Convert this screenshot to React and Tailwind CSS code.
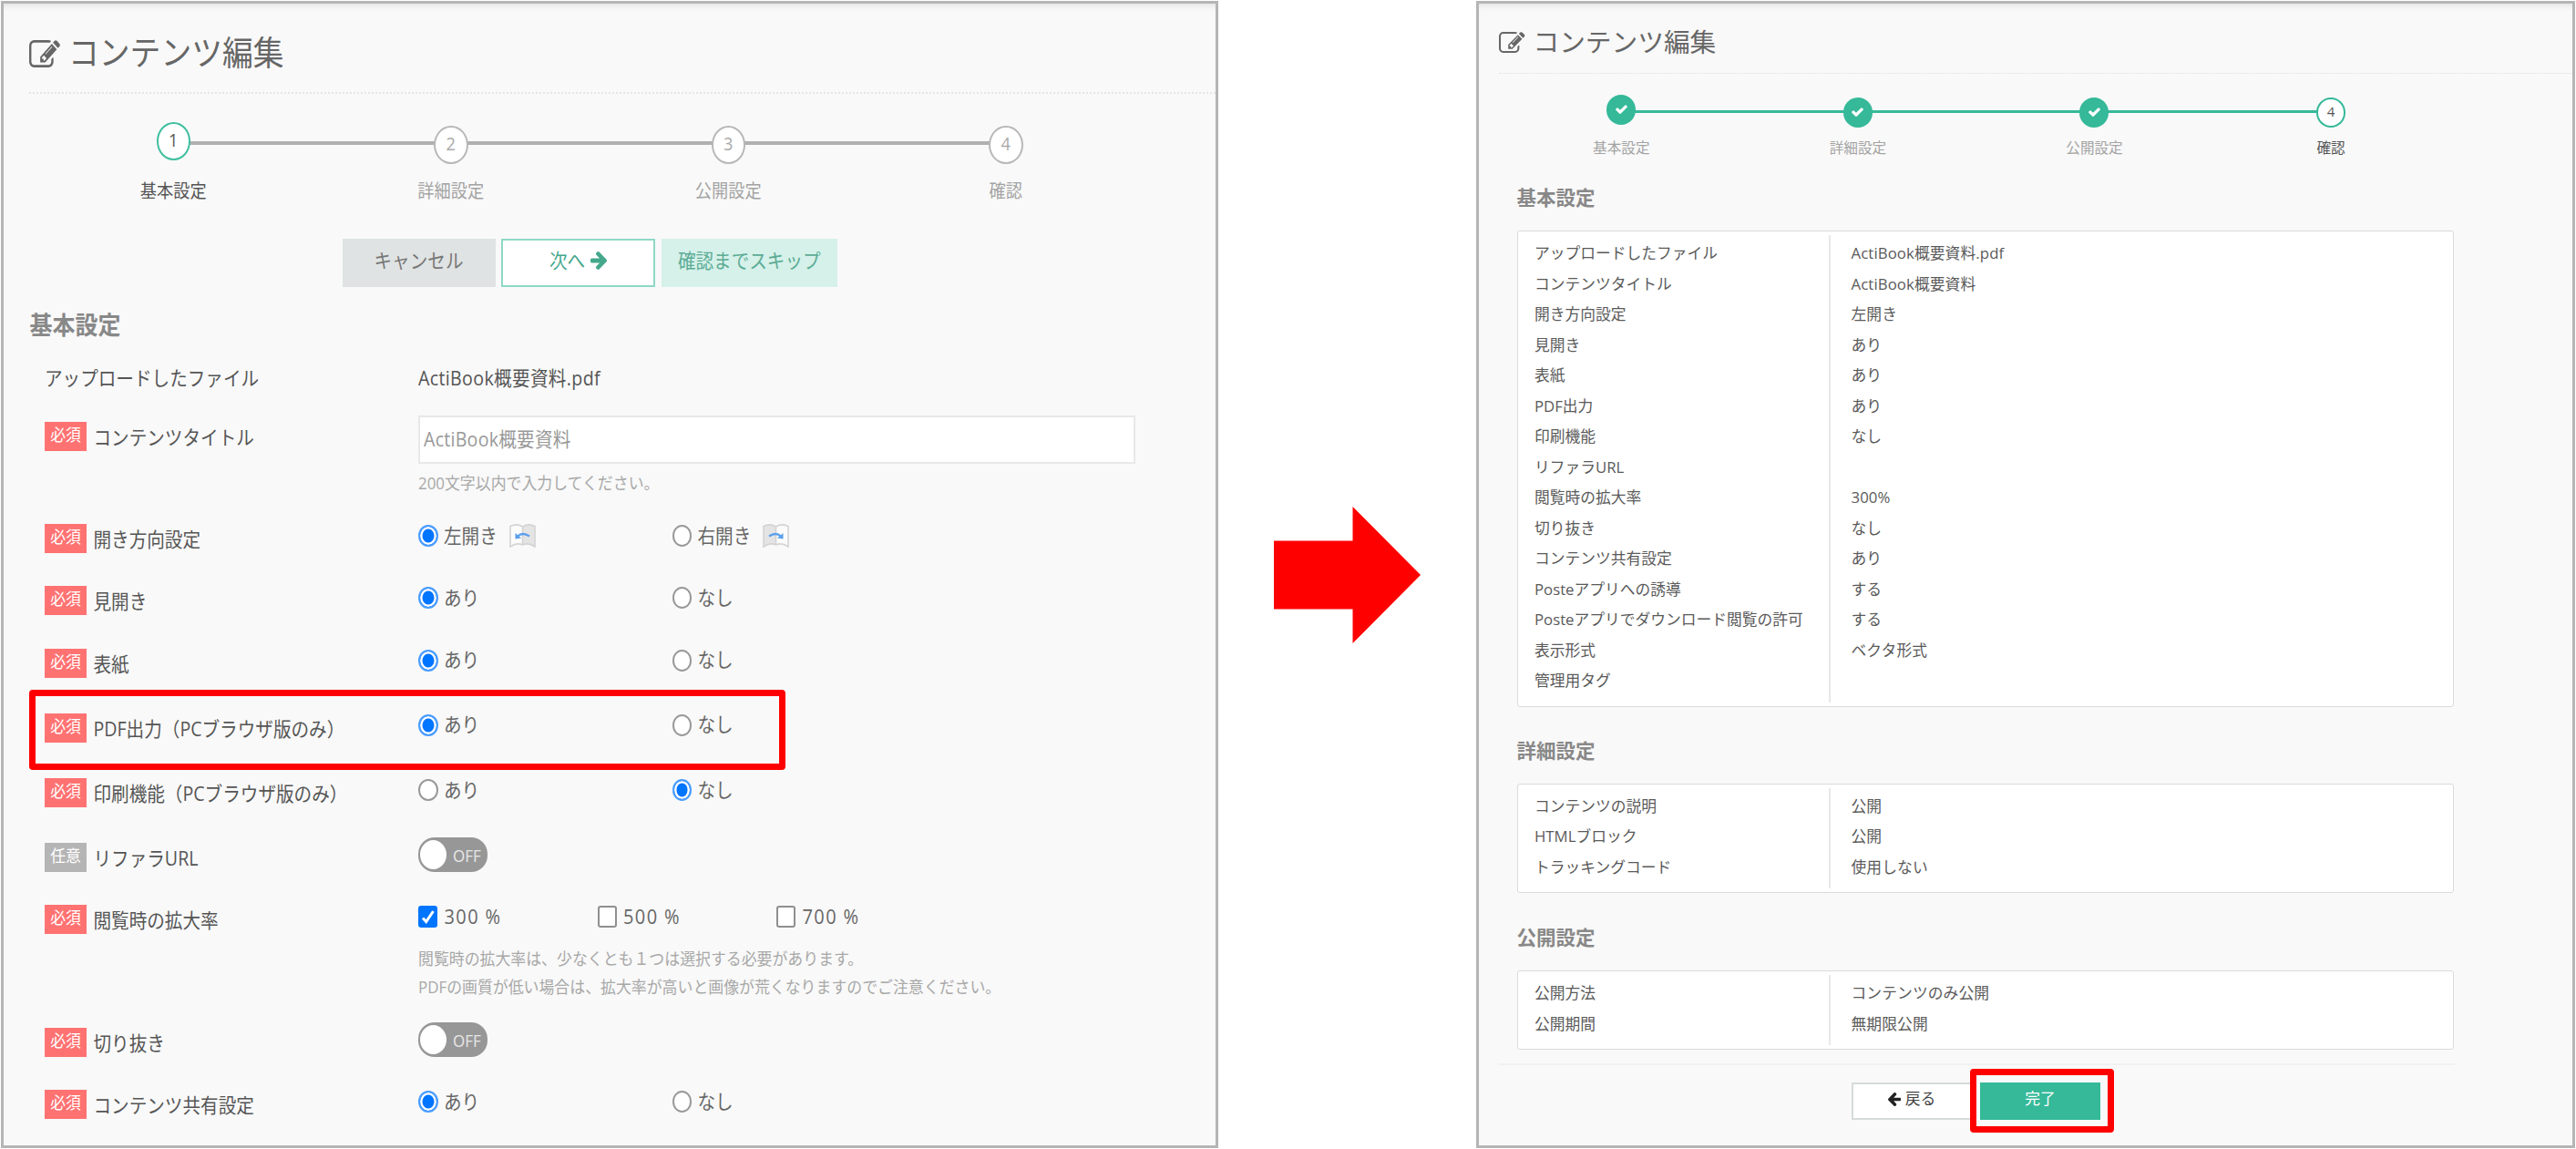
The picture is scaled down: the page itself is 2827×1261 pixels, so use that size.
import clsx from "clsx";

const formRows = [
  { label: "見開き", height: "h-[68.7px]", value: "あり" },
  { label: "表紙", height: "h-[71px]", value: "あり" },
  { label: "PDF出力（PCブラウザ版のみ）", height: "h-[71.3px]", value: "あり" },
  { label: "印刷機能（PCブラウザ版のみ）", height: "h-[71.2px]", value: "なし" },
];

const basicSummary = [
  ["アップロードしたファイル", "ActiBook概要資料.pdf"],
  ["コンテンツタイトル", "ActiBook概要資料"],
  ["開き方向設定", "左開き"],
  ["見開き", "あり"],
  ["表紙", "あり"],
  ["PDF出力", "あり"],
  ["印刷機能", "なし"],
  ["リファラURL", ""],
  ["閲覧時の拡大率", "300%"],
  ["切り抜き", "なし"],
  ["コンテンツ共有設定", "あり"],
  ["Posteアプリへの誘導", "する"],
  ["Posteアプリでダウンロード閲覧の許可", "する"],
  ["表示形式", "ベクタ形式"],
  ["管理用タグ", ""],
];

const detailSummary = [
  ["コンテンツの説明", "公開"],
  ["HTMLブロック", "公開"],
  ["トラッキングコード", "使用しない"],
];

const publishSummary = [
  ["公開方法", "コンテンツのみ公開"],
  ["公開期間", "無期限公開"],
];

const stepNames = ["基本設定", "詳細設定", "公開設定", "確認"];

function EditIcon({ className }) {
  return (
    <svg
      viewBox="0 128 1792 1408"
      preserveAspectRatio="none"
      fill="currentColor"
      className={className}
    >
      <path d="M888 1184l116-116-152-152-116 116v56h96v96h56zm440-720q-16-16-33 1l-350 350q-17 17-1 33t33-1l350-350q17-17 1-33zm80 594v190q0 119-84.5 203.5t-203.5 84.5h-832q-119 0-203.5-84.5t-84.5-203.5v-832q0-119 84.5-203.5t203.5-84.5h832q63 0 117 25 15 7 18 23 3 17-9 29l-49 49q-14 14-32 8-23-6-45-6h-832q-66 0-113 47t-47 113v832q0 66 47 113t113 47h832q66 0 113-47t47-113v-126q0-13 9-22l64-64q15-15 35-7t20 29zm-96-738l288 288-672 672h-288v-288zm444 132l-92 92-288-288 92-92q28-28 68-28t68 28l152 152q28 28 28 68t-28 68z" />
    </svg>
  );
}

function ArrowIcon({ className }) {
  return (
    <svg
      viewBox="128 183 1472 1556"
      preserveAspectRatio="none"
      fill="currentColor"
      className={className}
    >
      <path d="M1600 960q0 54-37 91l-651 651q-39 37-91 37-51 0-90-37l-75-75q-38-38-38-91t38-91l293-293h-704q-52 0-84.5-37.5t-32.5-90.5v-128q0-53 32.5-90.5t84.5-37.5h704l-293-294q-38-36-38-90t38-90l75-75q38-38 90-38 53 0 91 38l651 651q37 35 37 90z" />
    </svg>
  );
}

function CheckIcon({ className }) {
  return (
    <svg viewBox="121 314 1550 1208" fill="currentColor" className={className}>
      <path d="M1671 566q0 40-28 68l-724 724-136 136q-28 28-68 28t-68-28l-136-136-362-362q-28-28-28-68t28-68l136-136q28-28 68-28t68 28l294 295 656-657q28-28 68-28t68 28l136 136q28 28 28 68z" />
    </svg>
  );
}

function BookIcon({ flipped }) {
  return (
    <svg viewBox="0 0 29 26" className="ml-[13px] h-[26px] w-[29px] shrink-0">
      <g transform={flipped ? "matrix(-1 0 0 1 29 0)" : undefined}>
        <path d="M1 2.5Q8-1 14.5 3V23Q8 20 1 25Z" fill="#fbfbfb" />
        <path d="M28 2.5Q21-1 14.5 3V23Q21 20 28 25Z" fill="#e4e4e4" />
        <path
          d="M14.5 3Q8-1 1 2.5V25Q8 20 14.5 23Q21 20 28 25V2.5Q21-1 14.5 3V23"
          fill="none"
          stroke="#d4d4d4"
          strokeWidth="1.6"
        />
        <path d="M9 13.5Q14.5 8.5 22 13.5" fill="none" stroke="#5a9fec" strokeWidth="2.2" />
        <path d="M6.5 10V16.5L13 15.5Z" fill="#5a9fec" />
      </g>
    </svg>
  );
}

// Form labels are set slightly taller than their natural proportions
function Tall({ className, children }) {
  return (
    <span className={clsx("inline-block scale-y-110 whitespace-nowrap", className)}>
      {children}
    </span>
  );
}

function Badge({ optional }) {
  return (
    <span
      className={clsx(
        "mr-[7.5px] flex h-8 w-[46px] shrink-0 items-center justify-center pb-[3px] text-[16.8px] leading-none text-white",
        optional ? "bg-[#b5b5b5]" : "bg-[#ff7272]"
      )}
    >
      <Tall>{optional ? "任意" : "必須"}</Tall>
    </span>
  );
}

function FormRow({ label, height, optional, labelPad = "pt-[3px]", children }) {
  return (
    <div className={clsx("flex items-start", height)}>
      <div className={clsx("flex w-[410px] shrink-0", labelPad)}>
        <Badge optional={optional} />
        <Tall className="pt-px leading-8 text-[#555]">{label}</Tall>
      </div>
      <div>{children}</div>
    </div>
  );
}

function Radio({ label, checked, children }) {
  return (
    <label className="flex h-8 w-[278.5px] items-center">
      <input
        type="radio"
        checked={checked}
        readOnly
        className="mr-[6.5px] h-6 w-[21.5px] shrink-0 appearance-none rounded-[50%] border-2 border-[#999] bg-white checked:border-[#4a9dff] checked:bg-[#0075ff] checked:shadow-[inset_0_0_0_2.5px_#fff]"
      />
      <Tall className="-mt-px text-[#666]">{label}</Tall>
      {children}
    </label>
  );
}

function YesNo({ value }) {
  return (
    <div className="flex">
      <Radio label="あり" checked={value === "あり"} />
      <Radio label="なし" checked={value === "なし"} />
    </div>
  );
}

function Toggle() {
  return (
    <div className="-mt-[3px] flex h-[38px] w-[75.5px] items-center rounded-[18px] bg-[#979797] pl-[2px]">
      <span className="h-8 w-[29px] rounded-[50%] bg-white" />
      <Tall className="ml-[7px] text-[17px] leading-none text-[#e8e8e8]">OFF</Tall>
    </div>
  );
}

function Checkbox({ label, checked }) {
  return (
    <label className="flex h-8 w-[196.5px] items-center">
      <span
        className={clsx(
          "mr-[7.5px] flex h-6 w-[21px] items-center justify-center rounded-[3px]",
          checked ? "bg-[#0075ff] text-white" : "border-2 border-[#8f8f8f] bg-white"
        )}
      >
        {checked && (
          <svg viewBox="0 0 16 18" className="h-[18px] w-4">
            <path
              d="M2 10.5L5.7 14.5L13.5 3"
              fill="none"
              stroke="currentColor"
              strokeWidth="3"
            />
          </svg>
        )}
      </span>
      <Tall className="text-[20px] tracking-[1.4px] text-[#666]">{label}</Tall>
    </label>
  );
}

function EditSteps() {
  return (
    <div className="relative ml-[34px] mt-[31px] flex">
      <div className="absolute left-[152px] top-[21px] h-[3.5px] w-[913px] bg-[#b0b0b0]" />
      {stepNames.map((name, i) => (
        <div key={name} className="relative flex w-[304.5px] flex-col items-center">
          <div className="flex h-[61px] items-start">
            <span
              className={clsx(
                "flex h-[42px] w-[37.5px] items-center justify-center rounded-[50%] border-2 bg-white pb-0.5 text-[18.2px]",
                i === 0 ? "border-[#3fbf9f] text-[#555]" : "mt-[3.5px] border-[#b8b8b8] text-[#aaa]"
              )}
            >
              <Tall>{i + 1}</Tall>
            </span>
          </div>
          <Tall
            className={clsx("text-[18.2px] leading-7", i === 0 ? "text-[#555]" : "text-[#a3a3a3]")}
          >
            {name}
          </Tall>
        </div>
      ))}
    </div>
  );
}

function ConfirmSteps() {
  return (
    <div className="relative ml-[26.5px] mt-[23px] flex">
      <div className="absolute left-[130px] top-[17px] h-[3px] w-[779px] bg-[#35b999]" />
      {stepNames.map((name, i) => (
        <div key={name} className="relative flex w-[259.6px] flex-col items-center">
          <div className="flex h-[46px] items-start">
            <span
              className={clsx(
                "flex h-[32.5px] w-8 items-center justify-center rounded-[50%] border-2 border-[#35b999] text-[15px]",
                i > 0 && "mt-[3px]",
                i < 3 ? "bg-[#35b999] text-white" : "bg-white pb-0.5 text-[#555]"
              )}
            >
              {i < 3 ? <CheckIcon className="h-[10px] w-[13px]" /> : i + 1}
            </span>
          </div>
          <span
            className={clsx("text-[15.6px] leading-6", i === 3 ? "text-[#555]" : "text-[#a3a3a3]")}
          >
            {name}
          </span>
        </div>
      ))}
    </div>
  );
}

function Summary({ title, rows, className }) {
  return (
    <section className={clsx("ml-[41.5px] w-[1028.5px]", className)}>
      <h2 className="text-[21.5px] font-bold leading-8 text-[#888]">{title}</h2>
      <div className="mt-[20px] rounded-[3px] border-[1.5px] border-[#dadada] bg-white py-1">
        <dl className="grid grid-cols-[343px_1fr] text-[16.75px] leading-[33.5px] text-[#5a5a5a]">
          <div className="border-r-2 border-[#e8e8e8] pb-[7px] pl-[18.5px] pt-[3px]">
            {rows.map(([name]) => (
              <dt key={name} className="h-[33.5px] whitespace-nowrap">
                {name}
              </dt>
            ))}
          </div>
          <div className="pl-[23px] pt-[3px] tracking-[0.1px]">
            {rows.map(([name, value]) => (
              <dd key={name} className="h-[33.5px]">
                {value}
              </dd>
            ))}
          </div>
        </dl>
      </div>
    </section>
  );
}

function EditPanel() {
  return (
    <div className="relative h-[1259px] w-[1336px] shrink-0 overflow-hidden border-[3px] border-[#b5b5b5] bg-[#f9f9f9] text-[19.6px] shadow-[inset_0_7px_6px_-4px_#e4e4e4]">
      <header className="ml-[28px] flex h-[99px] items-center border-b-2 border-dotted border-[#e6e6e6] pt-[12px]">
        <EditIcon className="h-[30px] w-[34px] text-[#666]" />
        <Tall className="ml-[9px] text-[33.8px] leading-none text-[#666]">コンテンツ編集</Tall>
      </header>

      <EditSteps />

      <div className="ml-[371.5px] mt-[39px] flex gap-[6.5px]">
        <button className="flex h-[53px] w-[168px] items-center justify-center bg-[#dfe3e3] pb-[5px] text-[#777]">
          <Tall>キャンセル</Tall>
        </button>
        <button className="flex h-[53px] w-[169px] items-center justify-center gap-[6px] border-2 border-[#8fd8c6] bg-white pb-[5px] text-[#45a88c]">
          <Tall>次へ</Tall>
          <ArrowIcon className="h-5 w-[18px]" />
        </button>
        <button className="flex h-[53px] w-[193.5px] items-center justify-center bg-[#d5f1e9] pb-[5px] text-[#5cab95]">
          <Tall>確認までスキップ</Tall>
        </button>
      </div>

      <h2 className="ml-[28.5px] mt-[23px] text-[25px] font-bold leading-9 text-[#888]">
        <Tall>基本設定</Tall>
      </h2>

      <div className="ml-[45px] mt-[26px]">
        <div className="flex h-[56px] leading-8 text-[#555]">
          <Tall className="w-[410px]">アップロードしたファイル</Tall>
          <Tall className="tracking-[0.35px]">ActiBook概要資料.pdf</Tall>
        </div>

        <FormRow label="コンテンツタイトル" height="h-[116px]" labelPad="pt-[6.5px]">
          <div className="flex h-[53px] w-[786.5px] items-center border-2 border-[#e8e8e8] bg-white pb-0.5 pl-1 text-[#999]">
            <Tall className="tracking-[0.25px]">ActiBook概要資料</Tall>
          </div>
          <Tall className="mt-[5px] text-[16.9px] leading-8 text-[#a8a8a8]">
            200文字以内で入力してください。
          </Tall>
        </FormRow>

        <FormRow label="開き方向設定" height="h-[68px]">
          <div className="flex">
            <Radio label="左開き" checked>
              <BookIcon />
            </Radio>
            <Radio label="右開き" checked={false}>
              <BookIcon flipped />
            </Radio>
          </div>
        </FormRow>

        {formRows.map((row) => (
          <FormRow key={row.label} label={row.label} height={row.height}>
            <YesNo value={row.value} />
          </FormRow>
        ))}

        <FormRow label="リファラURL" height="h-[67.8px]" optional>
          <Toggle />
        </FormRow>

        <FormRow label="閲覧時の拡大率" height="h-[135.2px]">
          <div className="flex">
            <Checkbox label="300 %" checked />
            <Checkbox label="500 %" />
            <Checkbox label="700 %" />
          </div>
          <div className="mt-[14px] flex flex-col items-start text-[16.9px] leading-[31px] text-[#a8a8a8]">
            <Tall>閲覧時の拡大率は、少なくとも１つは選択する必要があります。</Tall>
            <Tall>PDFの画質が低い場合は、拡大率が高いと画像が荒くなりますのでご注意ください。</Tall>
          </div>
        </FormRow>

        <FormRow label="切り抜き" height="h-[67.8px]">
          <Toggle />
        </FormRow>

        <FormRow label="コンテンツ共有設定" height="h-8">
          <YesNo value="あり" />
        </FormRow>
      </div>

      {/* highlight around the PDF output row */}
      <div className="absolute left-[28px] top-[753px] h-[88px] w-[830px] rounded-[4px] border-[7px] border-[#f00]" />
    </div>
  );
}

function ConfirmPanel() {
  return (
    <div className="relative h-[1259px] w-[1206px] shrink-0 overflow-hidden border-[3px] border-[#b5b5b5] bg-[#f9f9f9] text-[16.75px] shadow-[inset_0_7px_6px_-4px_#e4e4e4]">
      <header className="ml-[22px] flex h-[77px] items-center border-b-[1.5px] border-dotted border-[#e0e0e0] pt-[8px]">
        <EditIcon className="h-[23px] w-[28.5px] text-[#666]" />
        <span className="ml-[9px] text-[28.7px] leading-none text-[#666]">コンテンツ編集</span>
      </header>

      <ConfirmSteps />

      <Summary title="基本設定" rows={basicSummary} className="mt-[27px]" />
      <Summary title="詳細設定" rows={detailSummary} className="mt-[32px]" />
      <Summary title="公開設定" rows={publishSummary} className="mt-[33px]" />

      <footer className="ml-[22px] mt-[15px] w-[1049px] border-t-2 border-[#f1f1f1] pl-[387px] pt-[19px]">
        <div className="flex gap-[9px]">
          <button className="flex h-[41px] w-[132px] items-center justify-center gap-[5px] border-2 border-[#d5dbdb] bg-white pb-[5px] text-[#444]">
            <ArrowIcon className="h-[15px] w-[14px] rotate-180 text-[#222]" />
            戻る
          </button>
          <button className="flex h-[41px] w-[132px] items-center justify-center bg-[#35b999] pb-[5px] text-white">
            完了
          </button>
        </div>
      </footer>

      {/* highlight around the submit button */}
      <div className="absolute left-[539px] top-[1169px] h-[70px] w-[158px] rounded-[4px] border-[7px] border-[#f00]" />
    </div>
  );
}

export default function App() {
  return (
    <main
      lang="ja"
      className="flex h-[1261px] w-[2827px] overflow-hidden bg-white pl-px pt-px font-['Open_Sans','Noto_Sans_CJK_JP',sans-serif]"
    >
      <EditPanel />
      <div className="flex h-[1259px] w-[283px] shrink-0 items-center pl-[61px]">
        <svg viewBox="0 0 161 150" className="h-[150px] w-[161px]">
          <path d="M0 37.5H86.5V0L161 75L86.5 150V112.5H0Z" fill="#f00" />
        </svg>
      </div>
      <ConfirmPanel />
    </main>
  );
}
